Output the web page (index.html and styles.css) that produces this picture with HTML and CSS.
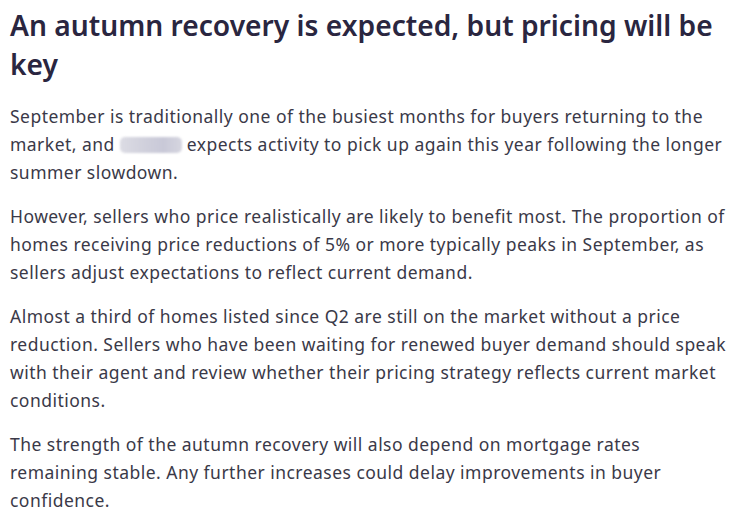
FILE: index.html
```html
<!DOCTYPE html>
<html lang="en">
<head>
<meta charset="utf-8">
<title>An autumn recovery is expected</title>
<link rel="stylesheet" href="styles.css">
</head>
<body>
<article class="article">
  <h2 class="title">An autumn recovery is expected, but pricing will be key</h2>
  <p class="para">September is traditionally one of the busiest months for buyers returning to the market, and <span class="redacted" aria-label="redacted"></span> expects activity to pick up again this year following the longer summer slowdown.</p>
  <p class="para">However, sellers who price realistically are likely to benefit most. The proportion of homes receiving price reductions of 5% or more typically peaks in September, as sellers adjust expectations to reflect current demand.</p>
  <p class="para">Almost a third of homes listed since Q2 are still on the market without a price reduction. Sellers who have been waiting for renewed buyer demand should speak with their agent and review whether their pricing strategy reflects current market conditions.</p>
  <p class="para">The strength of the autumn recovery will also depend on mortgage rates remaining stable. Any further increases could delay improvements in buyer confidence.</p>
</article>
</body>
</html>
```
FILE: styles.css
```css
html, body {
  margin: 0;
  padding: 0;
  background: #ffffff;
}
body {
  font-family: "Noto Sans", "Open Sans", sans-serif;
}
.article {
  width: 720px;
  padding: 6px 0 0 10px;
}
.title {
  margin: 0 0 18px 0;
  font-size: 28.2px;
  line-height: 39px;
  font-weight: 600;
  color: #2a2640;
}
.para {
  margin: 0 0 16px 0;
  font-size: 17.5px;
  line-height: 28px;
  color: #3a3948;
  letter-spacing: 0.47px;
}
.redacted {
  display: inline-block;
  width: 62px;
  height: 16px;
  vertical-align: -2px;
  border-radius: 5px;
  background: linear-gradient(90deg, #dcdce4 0%, #d0d0dc 40%, #c9c9d8 70%, #d6d6e0 100%);
  filter: blur(1px);
}
```
